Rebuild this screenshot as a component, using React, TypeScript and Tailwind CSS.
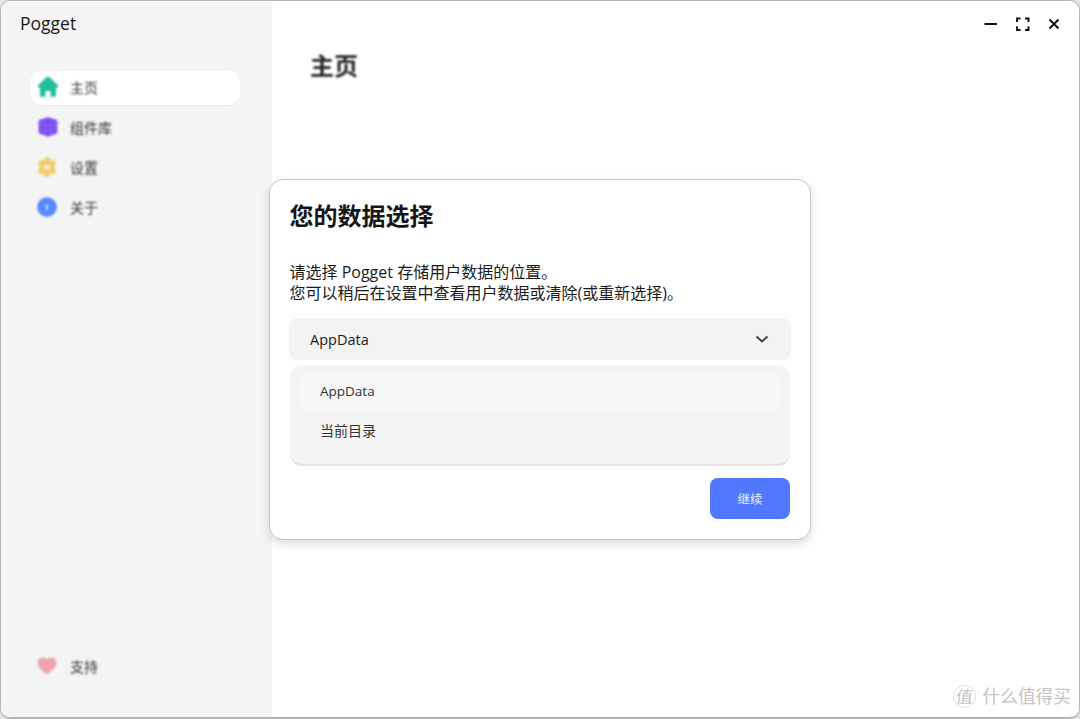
import { useState } from "react";
import type { ReactNode } from "react";

const HomeIcon = () => (
  <svg viewBox="0 0 22 22" className="h-[22px] w-[22px]" fill="#1fbf9c">
    <path d="M9.8 1.1a1.8 1.8 0 0 1 2.4 0l8.7 8.1c.9.9.4 2.2-.8 2.2H19v8.2c0 .8-.5 1.2-1.2 1.2h-4.2v-4.500c0-.8-.5-1.300-1.200-1.300H9.600c-.7 0-1.200.5-1.200 1.300v4.500H4.200c-.7 0-1.200-.4-1.200-1.200v-8.200H1.900c-1.200 0-1.700-1.300-.8-2.200z" />
  </svg>
);

const BlocksIcon = () => (
  <svg viewBox="0 0 22 22" className="ml-px h-[22px] w-[22px]" fill="#7b50f2">
    <path d="M10 1.500a3 3 0 0 1 2 0l7 2.300c.9.300 1.400.8 1.400 1.700v10.500c0 .9-.5 1.500-1.400 1.800l-7 2.400a3 3 0 0 1-2 0l-7-2.400c-.9-.3-1.400-.9-1.400-1.800V5.500c0-.9.5-1.400 1.400-1.700z" />
    <path d="M3 7.500l8 2.500 8-2.500M3 13l8 2.500 8-2.500" fill="none" stroke="#9270f5" strokeWidth="0.800" />
  </svg>
);

const SettingsIcon = () => (
  <svg viewBox="0 0 22 22" className="h-[22px] w-[22px]">
    <path
      d="M9 2.200 10.300 1h1.400L13 2.200l1 2.300 2.300-.3 2 .5 1.200 1.800-.4 2L17.600 11l1.500 2.500.4 2-1.200 1.800-2 .5-2.300-.3-1 2.300L11.700 21h-1.400L9 19.800l-1-2.300-2.300.3-2-.5-1.200-1.800.4-2L4.400 11 2.900 8.500l-.4-2 1.200-1.800 2-.5 2.300.3z"
      fill="#f4ca6c"
      stroke="#f4ca6c"
      strokeWidth="0.600"
      strokeLinejoin="round"
    />
    <ellipse cx="11" cy="11" rx="3.400" ry="2" fill="#fff6e0" />
  </svg>
);

const AboutIcon = () => (
  <svg viewBox="0 0 22 22" className="h-[22px] w-[22px]">
    <circle cx="11" cy="11" r="9.800" fill="#568aff" />
    <path d="M11 9v4.500" stroke="#d7e5ff" strokeWidth="1.800" strokeLinecap="round" />
  </svg>
);

const HeartIcon = () => (
  <svg viewBox="0 0 22 22" className="h-[22px] w-[22px]" fill="#eea3b1">
    <path d="M11 19.500C6.500 16 1.700 12.200 1.700 7.700 1.700 4.700 3.800 2.500 6.500 2.500c1.900 0 3.500.9 4.500 2.300 1-1.400 2.600-2.300 4.500-2.300 2.700 0 4.800 2.200 4.800 5.200 0 4.500-4.800 8.300-9.300 11.800z" />
  </svg>
);

type NavItemProps = {
  label: string;
  icon: ReactNode;
  active?: boolean;
  onClick: () => void;
};

const NavItem = ({ label, icon, active, onClick }: NavItemProps) => (
  <button
    onClick={onClick}
    className={
      active
        ? "flex h-[34px] w-[210px] items-center rounded-[12px] bg-white pl-[7px] shadow-[0_1px_1px_rgba(0,0,0,0.04)]"
        : "flex h-[34px] w-[210px] items-center rounded-[12px] pl-[6px]"
    }
  >
    <span className={active ? "mb-[2px] flex w-[33px] blur-[0.8px]" : "mb-[2px] flex w-[34px] blur-[0.8px]"}>
      {icon}
    </span>
    <span className="text-[14px] leading-5 text-[#333] blur-[1.2px]">{label}</span>
  </button>
);

const navItems = [
  { label: "主页", icon: <HomeIcon /> },
  { label: "组件库", icon: <BlocksIcon /> },
  { label: "设置", icon: <SettingsIcon /> },
  { label: "关于", icon: <AboutIcon /> },
];

const locations = ["AppData", "当前目录"];

const App = () => {
  const [page, setPage] = useState("主页");
  const [location, setLocation] = useState("AppData");

  return (
    <div className="h-[719px] w-[1080px] bg-[#e4e4e4] font-['Open_Sans','Noto_Sans_CJK_SC',sans-serif] text-[#1a1a1a]">
      <div className="relative flex h-full overflow-hidden rounded-[10px] border border-b-2 border-[#b5b5b5] bg-white">
        {/* Sidebar */}
        <aside className="flex w-[271px] shrink-0 flex-col bg-[#f4f4f4] pb-[33px]">
          <div className="pl-[19px] pt-[10px] text-[17.500px] leading-6">Pogget</div>
          <nav className="mt-9 flex flex-1 flex-col gap-[6px] pl-[29px]">
            {navItems.map((item) => (
              <NavItem
                key={item.label}
                label={item.label}
                icon={item.icon}
                active={page === item.label}
                onClick={() => setPage(item.label)}
              />
            ))}
          </nav>
          <div className="pl-[29px]">
            <NavItem label="支持" icon={<HeartIcon />} onClick={() => setPage("支持")} />
          </div>
        </aside>

        {/* Page content */}
        <main className="flex flex-1 flex-col">
          <div className="flex h-[46px] items-center justify-end gap-[16px] pr-[17px]">
            <svg viewBox="0 0 16 16" className="h-4 w-4" stroke="#111" strokeWidth="2">
              <path d="M2.500 8h12.500" />
            </svg>
            <svg viewBox="0 0 16 16" className="h-4 w-4" fill="none" stroke="#111" strokeWidth="2">
              <path d="M6.500 2.500H3V6M11 2.500h3.500V6M6.500 14H3V10.500M11 14h3.500V10.500" />
            </svg>
            <svg viewBox="0 0 16 16" className="h-4 w-4" stroke="#111" strokeWidth="2">
              <path d="M3.500 3.500l9 9M12.500 3.500l-9 9" />
            </svg>
          </div>
          <h1 className="pl-[38px] text-[24px] font-bold leading-[38px] text-[#222] blur-[1.2px]">主页</h1>
          <div className="mt-auto flex items-center justify-end gap-[7px] pb-[9px] pr-[8px] text-[#c4c4c4]">
            <span className="flex h-[23px] w-[23px] items-center justify-center rounded-full border border-[#dcdcdc] text-[17px] leading-none">
              <span className="-skew-x-6">值</span>
            </span>
            <span className="text-[17.700px] leading-6">什么值得买</span>
          </div>
        </main>

        {/* Data location dialog */}
        <div className="absolute left-[268px] top-[178px] flex h-[361px] w-[542px] flex-col rounded-[14px] border border-[#c4c4c4] bg-white px-[19px] shadow-[0_4px_10px_rgba(0,0,0,0.14)]">
          <h2 className="mt-[18px] pl-[0.500px] text-[24px] font-bold leading-9 text-[#161616]">您的数据选择</h2>
          <p className="mt-[28px] whitespace-nowrap pl-[0.500px] text-[16px] leading-[21px]">
            请选择 Pogget 存储用户数据的位置。
            <br />
            您可以稍后在设置中查看用户数据或清除(或重新选择)。
          </p>
          <div className="mt-[14px] flex h-[42px] shrink-0 items-center justify-between rounded-[8px] bg-[#f3f3f3] pl-[21px] pr-[22px] text-[14.500px]">
            <span className="pt-px">{location}</span>
            <svg viewBox="0 0 14 14" className="h-[14px] w-[14px]" fill="none" stroke="#444" strokeWidth="2">
              <path d="M1.500 4.500 7 9.500l5.500-5" />
            </svg>
          </div>
          <ul className="mx-px mt-[5px] h-[101px] shrink-0 rounded-[12px] border-b-2 border-[#e2e2e2] bg-[#f4f4f4] px-[10px] pt-[9px] text-[#333]">
            {locations.map((name) => (
              <li
                key={name}
                onClick={() => setLocation(name)}
                className={
                  name === location
                    ? "mb-1 flex h-9 items-center rounded-[7px] bg-[#f7f7f7] pb-[2px] pl-5 text-[13.500px]"
                    : "mb-1 flex h-9 items-center rounded-[7px] pb-[4px] pl-5 text-[14px]"
                }
              >
                {name}
              </li>
            ))}
          </ul>
          <button className="mr-px mt-[12px] h-[41px] w-20 self-end rounded-[8px] bg-[#5079ff] pt-[3px] text-[12.500px] text-[#e8edff]">
            继续
          </button>
        </div>
      </div>
    </div>
  );
};

export default App;
